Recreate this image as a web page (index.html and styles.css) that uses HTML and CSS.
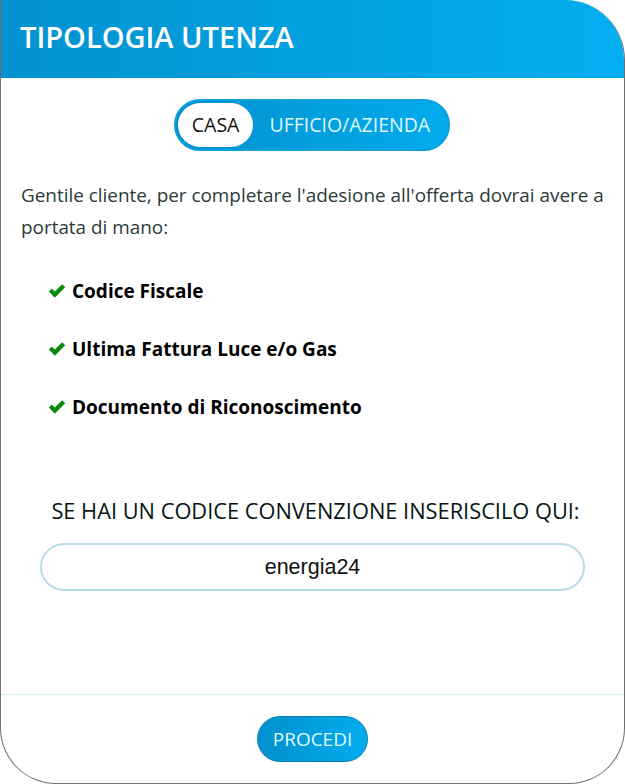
FILE: index.html
```html
<!DOCTYPE html>
<html lang="it">
<head>
<meta charset="utf-8">
<title>Tipologia utenza</title>
<link rel="stylesheet" href="styles.css">
</head>
<body>
<div class="modal">
  <header class="modal-header">
    <h1 class="title">TIPOLOGIA UTENZA</h1>
  </header>
  <main class="modal-body">
    <div class="toggle-wrap">
      <div class="toggle">
        <span class="opt opt-active">CASA</span>
        <span class="opt">UFFICIO/AZIENDA</span>
      </div>
    </div>
    <p class="intro">Gentile cliente, per completare l'adesione all'offerta dovrai avere a portata di mano:</p>
    <ul class="checklist">
      <li class="item"><svg class="check" viewBox="0 0 16 13" width="18" height="14"><path d="M0.4 7 L3.2 4.2 L6 7 L12.8 0.3 L15.6 3.1 L6 12.7 Z" fill="#0a8a0a"/></svg><span>Codice Fiscale</span></li>
      <li class="item"><svg class="check" viewBox="0 0 16 13" width="18" height="14"><path d="M0.4 7 L3.2 4.2 L6 7 L12.8 0.3 L15.6 3.1 L6 12.7 Z" fill="#0a8a0a"/></svg><span>Ultima Fattura Luce e/o Gas</span></li>
      <li class="item"><svg class="check" viewBox="0 0 16 13" width="18" height="14"><path d="M0.4 7 L3.2 4.2 L6 7 L12.8 0.3 L15.6 3.1 L6 12.7 Z" fill="#0a8a0a"/></svg><span>Documento di Riconoscimento</span></li>
    </ul>
    <h2 class="code-label">SE HAI UN CODICE CONVENZIONE INSERISCILO QUI:</h2>
    <div class="code-field"><span class="code-value">energia24</span></div>
  </main>
  <footer class="modal-footer">
    <span class="btn">PROCEDI</span>
  </footer>
</div>
</body>
</html>
```
FILE: styles.css
```css
html, body {
  margin: 0;
  padding: 0;
  background: #ffffff;
}
body {
  font-family: "Open Sans", "Noto Sans", sans-serif;
}
.modal {
  width: 625px;
  height: 784px;
  box-sizing: border-box;
  border: 1px solid #6f6f6f;
  border-top: none;
  border-radius: 0 60px 56px 56px;
  overflow: hidden;
  display: flex;
  flex-direction: column;
  background: #fff;
}
.modal-header {
  height: 78px;
  flex: none;
  box-sizing: border-box;
  background: linear-gradient(90deg, #0392cf 0%, #03aef0 100%);
  display: flex;
  align-items: center;
  padding: 0 0 5px 20px;
  margin: 0 -1px;
}
.title {
  margin: 0;
  color: #ffffff;
  font-size: 29px;
  font-weight: 600;
  line-height: 36px;
}
.modal-body {
  flex: 1;
  padding: 21px 20px 0 20px;
}
.toggle-wrap {
  display: flex;
  justify-content: center;
  margin-left: -1px;
}
.toggle {
  display: flex;
  align-items: center;
  height: 52px;
  box-sizing: border-box;
  padding: 2px;
  border: 2px solid #0aa0dc;
  border-radius: 26px;
  background: linear-gradient(90deg, #0390cd 0%, #03acee 100%);
}
.opt {
  font-size: 19.5px;
  color: #dff8ff;
  padding: 0 16px 0 16px;
  line-height: 44px;
}
.opt-active {
  background: #ffffff;
  color: #111;
  border-radius: 22px;
  padding: 0 14px 0 14px;
}
.intro {
  margin: 28px 0 0 0;
  font-size: 18.9px;
  line-height: 32px;
  color: #2c3a3a;
}
.checklist {
  list-style: none;
  margin: 19px 0 0 0;
  padding: 0 0 0 27px;
}
.item {
  display: flex;
  align-items: center;
  gap: 6px;
  font-size: 19px;
  font-weight: 700;
  color: #000;
  height: 58px;
}
.check {
  flex: none;
}
.code-label {
  margin: 60px 0 0 0;
  text-align: center;
  font-size: 21.8px;
  font-weight: 400;
  line-height: 30px;
  color: #061414;
  padding-left: 6px;
}
.code-field {
  margin: 17px 19px 0 19px;
  height: 48px;
  box-sizing: border-box;
  border: 2px solid #b8dde6;
  border-radius: 24px;
  display: flex;
  align-items: center;
  justify-content: center;
}
.code-value {
  font-family: "Liberation Sans", Arial, sans-serif;
  font-size: 21.5px;
  color: #111;
}
.modal-footer {
  flex: none;
  height: 89px;
  border-top: 1px solid #d9eef3;
  display: flex;
  justify-content: center;
  padding-top: 21px;
  box-sizing: border-box;
}
.btn {
  display: inline-flex;
  align-items: center;
  justify-content: center;
  width: 111px;
  height: 46px;
  box-sizing: border-box;
  border: 1px solid #0a7fae;
  border-radius: 23px;
  background: linear-gradient(90deg, #0390cd 0%, #03acee 100%);
  color: #dff8ff;
  font-size: 19px;
}
```
